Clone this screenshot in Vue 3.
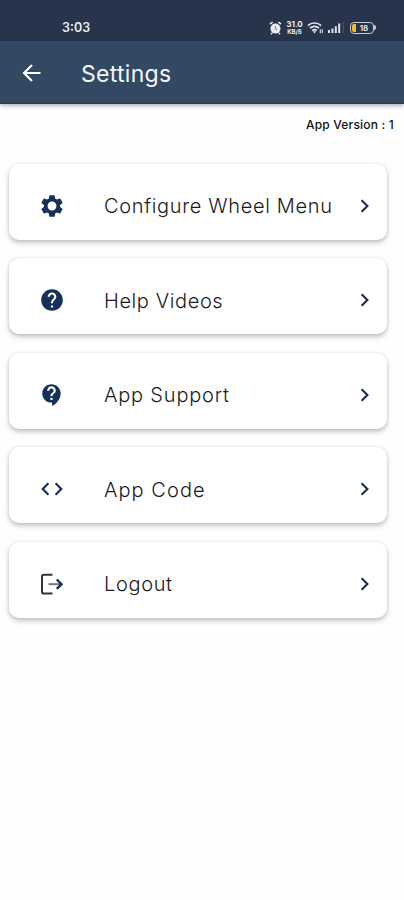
<script setup>
const gear = 'M19.43 12.98c.04-.32.07-.64.07-.98s-.03-.66-.07-.98l2.11-1.65c.19-.15.24-.42.12-.64l-2-3.46c-.12-.22-.39-.3-.61-.22l-2.49 1c-.52-.4-1.08-.73-1.69-.98l-.38-2.65C14.46 2.18 14.25 2 14 2h-4c-.25 0-.46.18-.49.42l-.38 2.65c-.61.25-1.17.59-1.69.98l-2.49-1c-.23-.09-.49 0-.61.22l-2 3.46c-.13.22-.07.49.12.64l2.11 1.65c-.04.32-.07.65-.07.98s.03.66.07.98l-2.11 1.65c-.19.15-.24.42-.12.64l2 3.46c.12.22.39.3.61.22l2.49-1c.52.4 1.08.73 1.69.98l.38 2.65c.03.24.24.42.49.42h4c.25 0 .46-.18.49-.42l.38-2.65c.61-.25 1.17-.59 1.69-.98l2.49 1c.23.09.49 0 .61-.22l2-3.46c.12-.22.07-.49-.12-.64l-2.11-1.65zM12 16.1a4.1 4.1 0 1 1 0-8.2 4.1 4.1 0 0 1 0 8.2z'
const help = 'M12 2C6.48 2 2 6.48 2 12s4.48 10 10 10 10-4.48 10-10S17.52 2 12 2zm1 17h-2v-2h2v2zm2.07-7.75l-.9.92C13.45 12.9 13 13.5 13 15h-2v-.5c0-1.1.45-2.1 1.17-2.83l1.24-1.26c.37-.36.59-.86.59-1.41 0-1.1-.9-2-2-2s-2 .9-2 2H8c0-2.21 1.79-4 4-4s4 1.79 4 4c0 .88-.36 1.68-.93 2.25z'
const support = 'M11.5 2C6.81 2 3 5.81 3 10.5S6.81 19 11.5 19h.5v3c4.86-2.34 8-7 8-11.5C20 5.81 16.19 2 11.5 2zm1 14.5h-2v-2h2v2zm0-3.5h-2c0-3.25 3-3 3-5 0-1.1-.9-2-2-2s-2 .9-2 2h-2c0-2.21 1.79-4 4-4s4 1.79 4 4c0 2.5-3 2.75-3 5z'
const code = 'M9.4 16.6L4.8 12l4.6-4.6L8 6l-6 6 6 6 1.4-1.4zm5.2 0l4.6-4.6-4.6-4.6L16 6l6 6-6 6-1.4-1.4z'

const items = [
  { id: 'wheel', label: 'Configure Wheel Menu', icon: gear },
  { id: 'help', label: 'Help Videos', icon: help },
  { id: 'support', label: 'App Support', icon: support },
  { id: 'code', label: 'App Code', icon: code },
  { id: 'logout', label: 'Logout', icon: null },
]
</script>

<template>
  <div class="screen">
    <div class="status">
      <span class="time">3:03</span>
      <div class="indicators">
        <svg class="alarm" viewBox="0 0 13 14">
          <circle cx="6.5" cy="7.6" r="5" />
          <path d="M1 3.2 3.6 1M12 3.2 9.4 1M3 12l-1 1.2M10 12l1 1.2" class="alarm-line" />
          <path d="M6.3 5.2v2.6l1.9 1" class="alarm-hand" />
        </svg>
        <div class="speed"><span class="rate">31.0</span><span class="unit">KB/S</span></div>
        <svg class="wifi" viewBox="0 0 17 14">
          <path d="M.8 4.6a10 10 0 0 1 13.4 0M3 7.2a6.6 6.6 0 0 1 9 0M5.2 9.6a3.4 3.4 0 0 1 4.6 0" />
          <path d="M5.8 10.3h3.4L7.5 12.6z" class="solid" />
          <path d="M13.3 8.2v4M15.3 8.2v4" class="thin" />
        </svg>
        <svg class="signal" viewBox="0 0 17 12">
          <path d="M0 8h2v3H0zM3.4 6.4h2V11h-2zM6.8 4.2h2V11h-2zM10.2 1.5h2V11h-2z" />
          <path d="M14.8 0h1v11h-1z" class="faint" />
        </svg>
        <div class="battery"><i class="charge"></i><span class="level">18</span></div>
      </div>
    </div>
    <header class="bar">
      <svg class="back" viewBox="0 0 20 20"><path d="M18.5 10H2M10 2 2 10l8 8" /></svg>
      <h1 class="title">Settings</h1>
    </header>
    <p class="version">App Version : 1</p>
    <main class="list">
      <div v-for="item in items" :key="item.id" class="card">
        <svg v-if="item.icon" class="icon" viewBox="0 0 24 24"><path :d="item.icon" /></svg>
        <svg v-else class="icon exit" viewBox="0 0 26 26">
          <path d="M13.5 3.8H4.8Q3 3.8 3 5.6V20.8Q3 22.6 4.8 22.6H13.5" class="frame" />
          <path d="M9.5 13.2H22" class="shaft" />
          <path d="M17.8 8.5 22.5 13.2 17.8 17.9" class="head" />
        </svg>
        <span class="label" :class="item.id">{{ item.label }}</span>
        <svg class="chevron" viewBox="0 0 10 14"><path d="M1.6 1.3 7.4 7 1.6 12.7" /></svg>
      </div>
    </main>
  </div>
</template>

<style>
body {
  margin: 0;
  background: #fefefe;
}
</style>

<style scoped>
.screen {
  min-height: 900px;
  background: #fefefe;
  font-family: Inter, "Open Sans", sans-serif;
}
.status {
  box-sizing: border-box;
  height: 41px;
  padding: 14px 28px 0 62px;
  display: flex;
  justify-content: space-between;
  background: #28344c;
  color: #e9edf1;
}
.time {
  font-size: 12.5px;
  line-height: 28px;
  height: 28px;
  font-weight: 600;
}
.indicators {
  display: flex;
  align-items: center;
  height: 27px;
}
.alarm {
  width: 13px;
  height: 14px;
  fill: #e9edf1;
}
.alarm-line {
  fill: none;
  stroke: #e9edf1;
  stroke-width: 1.6;
}
.alarm-hand {
  fill: none;
  stroke: #66748a;
  stroke-width: 1;
}
.speed {
  width: 17px;
  margin-left: 4px;
  display: flex;
  flex-direction: column;
  align-items: center;
  font-weight: 700;
}
.rate {
  font-size: 8px;
  line-height: 7px;
}
.unit {
  font-size: 6px;
  line-height: 7px;
}
.wifi {
  width: 17px;
  height: 14px;
  margin-left: 4px;
  fill: none;
  stroke: #dfe6ea;
  stroke-width: 1.7;
}
.solid {
  fill: #dfe6ea;
  stroke: none;
}
.thin {
  stroke-width: 1.1;
}
.signal {
  width: 17px;
  height: 12px;
  margin-left: 4px;
  fill: #dfe6ea;
}
.faint {
  fill: #4d5a70;
}
.battery {
  position: relative;
  box-sizing: border-box;
  width: 24px;
  height: 12px;
  margin: 0 2px 0 5px;
  padding: 1px;
  display: flex;
  align-items: center;
  border: 1.5px solid #c5ccd2;
  border-radius: 4px;
}
.battery::after {
  content: "";
  position: absolute;
  right: -3px;
  top: 2px;
  width: 2px;
  height: 5px;
  border-radius: 0 2px 2px 0;
  background: #c5ccd2;
}
.charge {
  width: 4px;
  height: 8px;
  border-radius: 2px 0 0 2px;
  background: #f0bd2c;
}
.level {
  flex: 1;
  text-align: center;
  font-size: 8px;
  line-height: 8px;
  font-weight: 600;
}
.bar {
  box-sizing: border-box;
  height: 63px;
  padding: 2px 22px 0;
  display: flex;
  align-items: center;
  background: #334863;
  border-bottom: 1px solid #1e3d5b;
  box-shadow: 0 2px 4px rgba(40, 50, 75, 0.36);
}
.back {
  width: 20px;
  height: 20px;
  fill: none;
  stroke: #fff;
  stroke-width: 2.2;
}
.title {
  margin: 1px 0 0 39px;
  color: #f4f7fb;
  font-size: 23px;
  line-height: 32px;
  font-weight: 400;
  letter-spacing: 0.3px;
}
.version {
  margin: 0;
  padding: 12px 10px 0 0;
  height: 18px;
  text-align: right;
  font-size: 12px;
  line-height: 17px;
  font-weight: 500;
  letter-spacing: 0.2px;
  color: #111;
  white-space: nowrap;
}
.list {
  padding: 29.5px 17px 0 9px;
  display: flex;
  flex-direction: column;
  gap: 18.5px;
}
.card {
  box-sizing: border-box;
  height: 76px;
  padding: 8px 17px 0 30px;
  display: flex;
  align-items: center;
  background: #fff;
  border-radius: 10px;
  box-shadow: 0 3px 5px rgba(60, 75, 90, 0.3), 0 0 3px rgba(60, 75, 90, 0.14);
}
.icon {
  width: 26px;
  height: 26px;
  fill: #17305a;
  fill-rule: evenodd;
}
.exit {
  fill: none;
  stroke: #333;
}
.frame {
  stroke-width: 2;
}
.shaft {
  stroke: #777;
  stroke-width: 2;
}
.head {
  stroke: #1b2a58;
  stroke-width: 2.4;
}
.label {
  flex: 1;
  margin: 1px 0 0 39px;
  font-size: 20px;
  line-height: 30px;
  font-weight: 300;
  color: #1c1c1c;
  white-space: nowrap;
}
.wheel {
  letter-spacing: 0.66px;
}
.help {
  letter-spacing: 0.6px;
}
.support {
  letter-spacing: 0.8px;
}
.code {
  letter-spacing: 1.05px;
}
.logout {
  letter-spacing: 0.65px;
}
.chevron {
  width: 10px;
  height: 14px;
  fill: none;
  stroke: #1f2c4c;
  stroke-width: 2.1;
}
</style>
